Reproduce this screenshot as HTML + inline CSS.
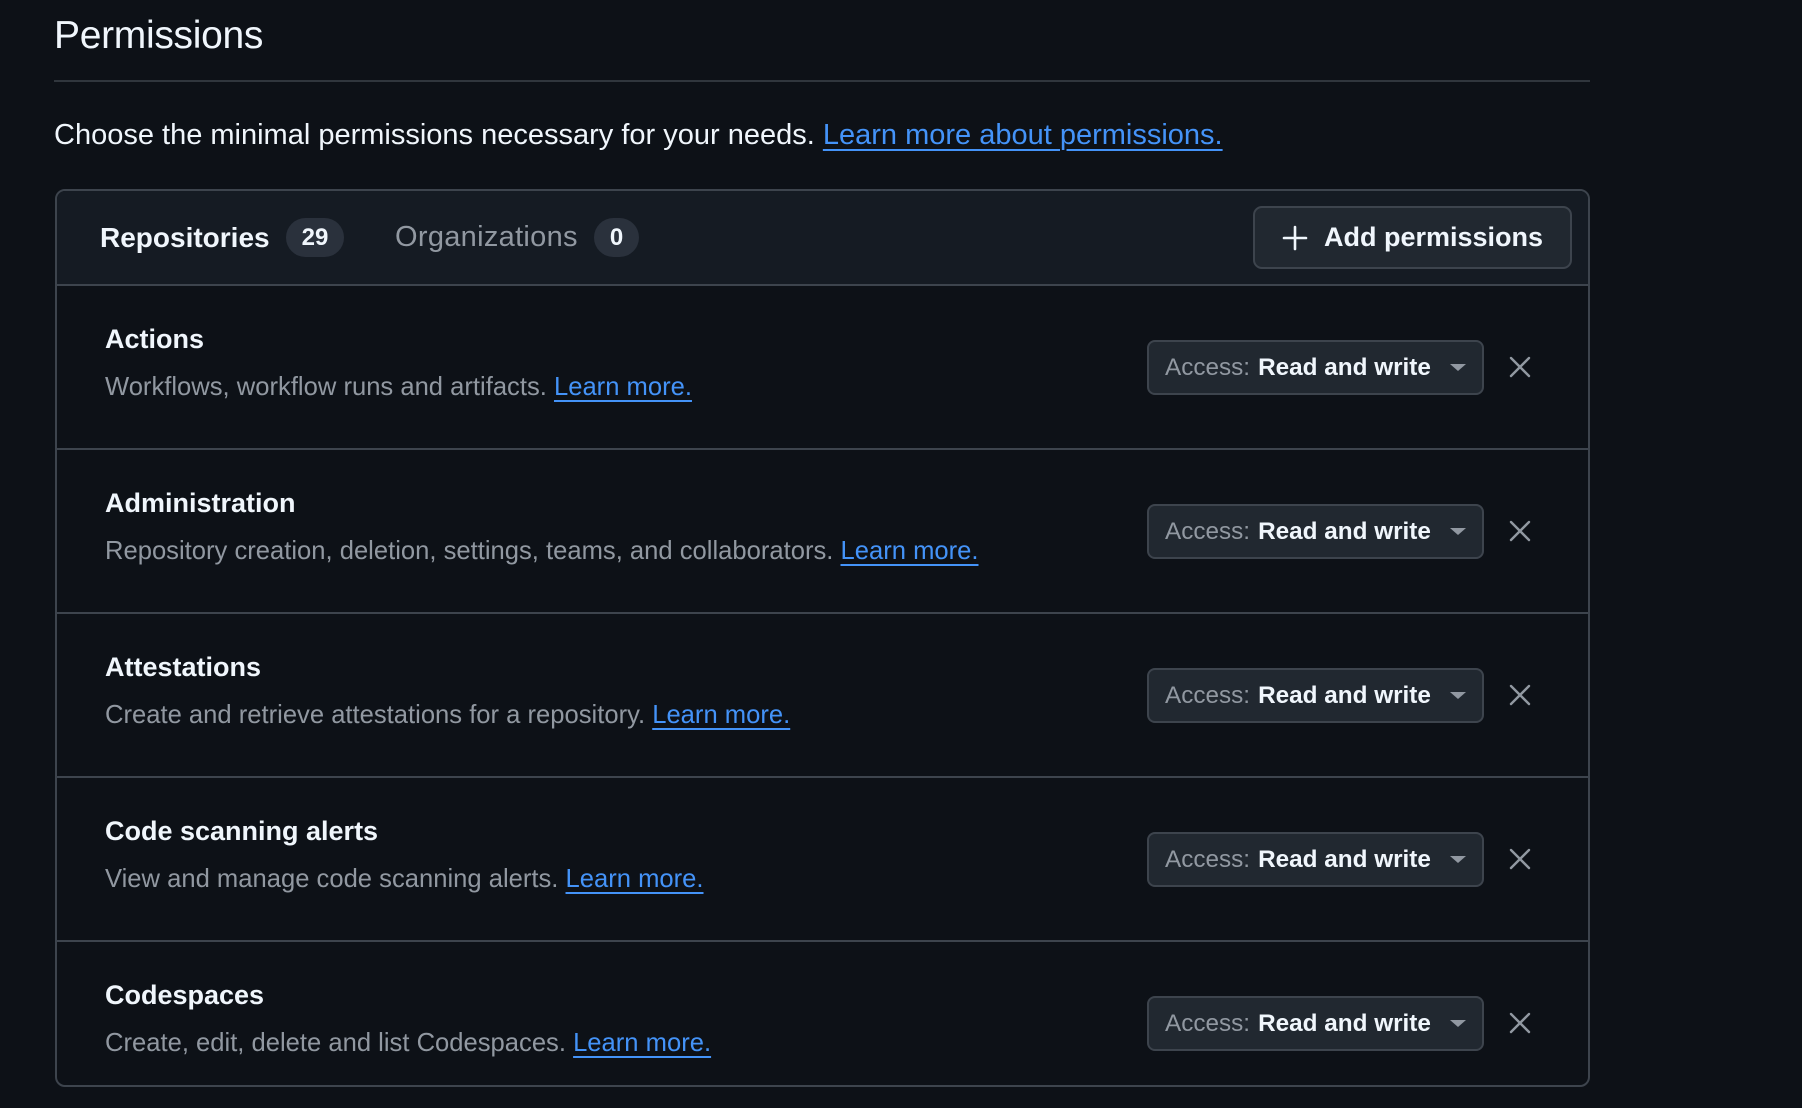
<!DOCTYPE html>
<html><head><meta charset="utf-8"><style>
*{box-sizing:border-box;margin:0;padding:0}
body{width:1802px;height:1108px;background:#0d1117;font-family:"Liberation Sans",sans-serif;color:#f0f6fc;position:relative;overflow:hidden}
h1{position:absolute;left:54px;top:14px;font-size:39px;font-weight:400;letter-spacing:-0.3px}
.hr{position:absolute;left:54px;top:80px;width:1536px;height:2px;background:#30363d}
.desc{position:absolute;left:54px;top:119px;font-size:29px;white-space:nowrap}
a{color:#4493f8;text-decoration:underline;text-underline-offset:5px;text-decoration-thickness:2px}
.box{position:absolute;left:55px;top:189px;width:1535px;height:898px;border:2px solid #3d444d;border-radius:10px;overflow:hidden}
.head{height:95px;background:#151b23;border-bottom:2px solid #3d444d;position:relative}
.tab{position:absolute;top:0;height:93px;display:flex;align-items:center;font-size:28px}
.badge{display:inline-flex;align-items:center;justify-content:center;height:39px;border-radius:20px;background:#2a313c;color:#f0f6fc;font-size:24px;font-weight:700;margin-left:16px;padding:0 16px}
.add{position:absolute;left:1196px;top:15px;width:319px;height:63px;border:2px solid #3d444d;border-radius:9px;background:#212830;display:flex;align-items:center;justify-content:center;font-size:27px;font-weight:700;gap:16px}
.row{height:164px;border-bottom:2px solid #3d444d;position:relative}
.row:last-child{border-bottom:none}
.t{position:absolute;left:48px;top:38px;font-size:27px;font-weight:700}
.d{position:absolute;left:48px;top:87px;font-size:25.6px;color:#9198a1;white-space:nowrap}
.acc{position:absolute;left:1090px;top:54px;width:337px;height:55px;border:2px solid #3d444d;border-radius:8px;background:#212830;display:flex;align-items:center;padding-left:16px;font-size:24.3px}
.acc .m{color:#9198a1;margin-right:8px}
.acc .v{font-weight:700}
.acc .car{position:absolute;right:16px;top:22px;width:0;height:0;border-left:8px solid transparent;border-right:8px solid transparent;border-top:7px solid #9198a1}
.x{position:absolute;left:1452px;top:70px}
</style></head><body>
<h1>Permissions</h1>
<div class="hr"></div>
<div class="desc">Choose the minimal permissions necessary for your needs. <a>Learn more about permissions.</a></div>
<div class="box">
<div class="head">
<div class="tab" style="left:43px;font-weight:700">Repositories<span class="badge">29</span></div>
<div class="tab" style="left:338px;color:#9198a1;font-size:29px;letter-spacing:0.3px">Organizations<span class="badge" style="letter-spacing:0">0</span></div>
<div class="add"><svg width="26" height="26" viewBox="0 0 26 26"><path d="M13 2v22M2 13h22" stroke="#f0f6fc" stroke-width="2.6" stroke-linecap="round"/></svg>Add permissions</div>
</div>
<div class="row"><div class="t">Actions</div><div class="d">Workflows, workflow runs and artifacts. <a>Learn more.</a></div><div class="acc"><span class="m">Access:</span><span class="v">Read and write</span><span class="car"></span></div><svg class="x" width="22" height="22" viewBox="0 0 22 22"><path d="M2 2l18 18M20 2L2 20" stroke="#9198a1" stroke-width="2.4" stroke-linecap="round"/></svg></div>
<div class="row"><div class="t">Administration</div><div class="d">Repository creation, deletion, settings, teams, and collaborators. <a>Learn more.</a></div><div class="acc"><span class="m">Access:</span><span class="v">Read and write</span><span class="car"></span></div><svg class="x" width="22" height="22" viewBox="0 0 22 22"><path d="M2 2l18 18M20 2L2 20" stroke="#9198a1" stroke-width="2.4" stroke-linecap="round"/></svg></div>
<div class="row"><div class="t">Attestations</div><div class="d">Create and retrieve attestations for a repository. <a>Learn more.</a></div><div class="acc"><span class="m">Access:</span><span class="v">Read and write</span><span class="car"></span></div><svg class="x" width="22" height="22" viewBox="0 0 22 22"><path d="M2 2l18 18M20 2L2 20" stroke="#9198a1" stroke-width="2.4" stroke-linecap="round"/></svg></div>
<div class="row"><div class="t">Code scanning alerts</div><div class="d">View and manage code scanning alerts. <a>Learn more.</a></div><div class="acc"><span class="m">Access:</span><span class="v">Read and write</span><span class="car"></span></div><svg class="x" width="22" height="22" viewBox="0 0 22 22"><path d="M2 2l18 18M20 2L2 20" stroke="#9198a1" stroke-width="2.4" stroke-linecap="round"/></svg></div>
<div class="row"><div class="t">Codespaces</div><div class="d">Create, edit, delete and list Codespaces. <a>Learn more.</a></div><div class="acc"><span class="m">Access:</span><span class="v">Read and write</span><span class="car"></span></div><svg class="x" width="22" height="22" viewBox="0 0 22 22"><path d="M2 2l18 18M20 2L2 20" stroke="#9198a1" stroke-width="2.4" stroke-linecap="round"/></svg></div>
</div>
</body></html>
